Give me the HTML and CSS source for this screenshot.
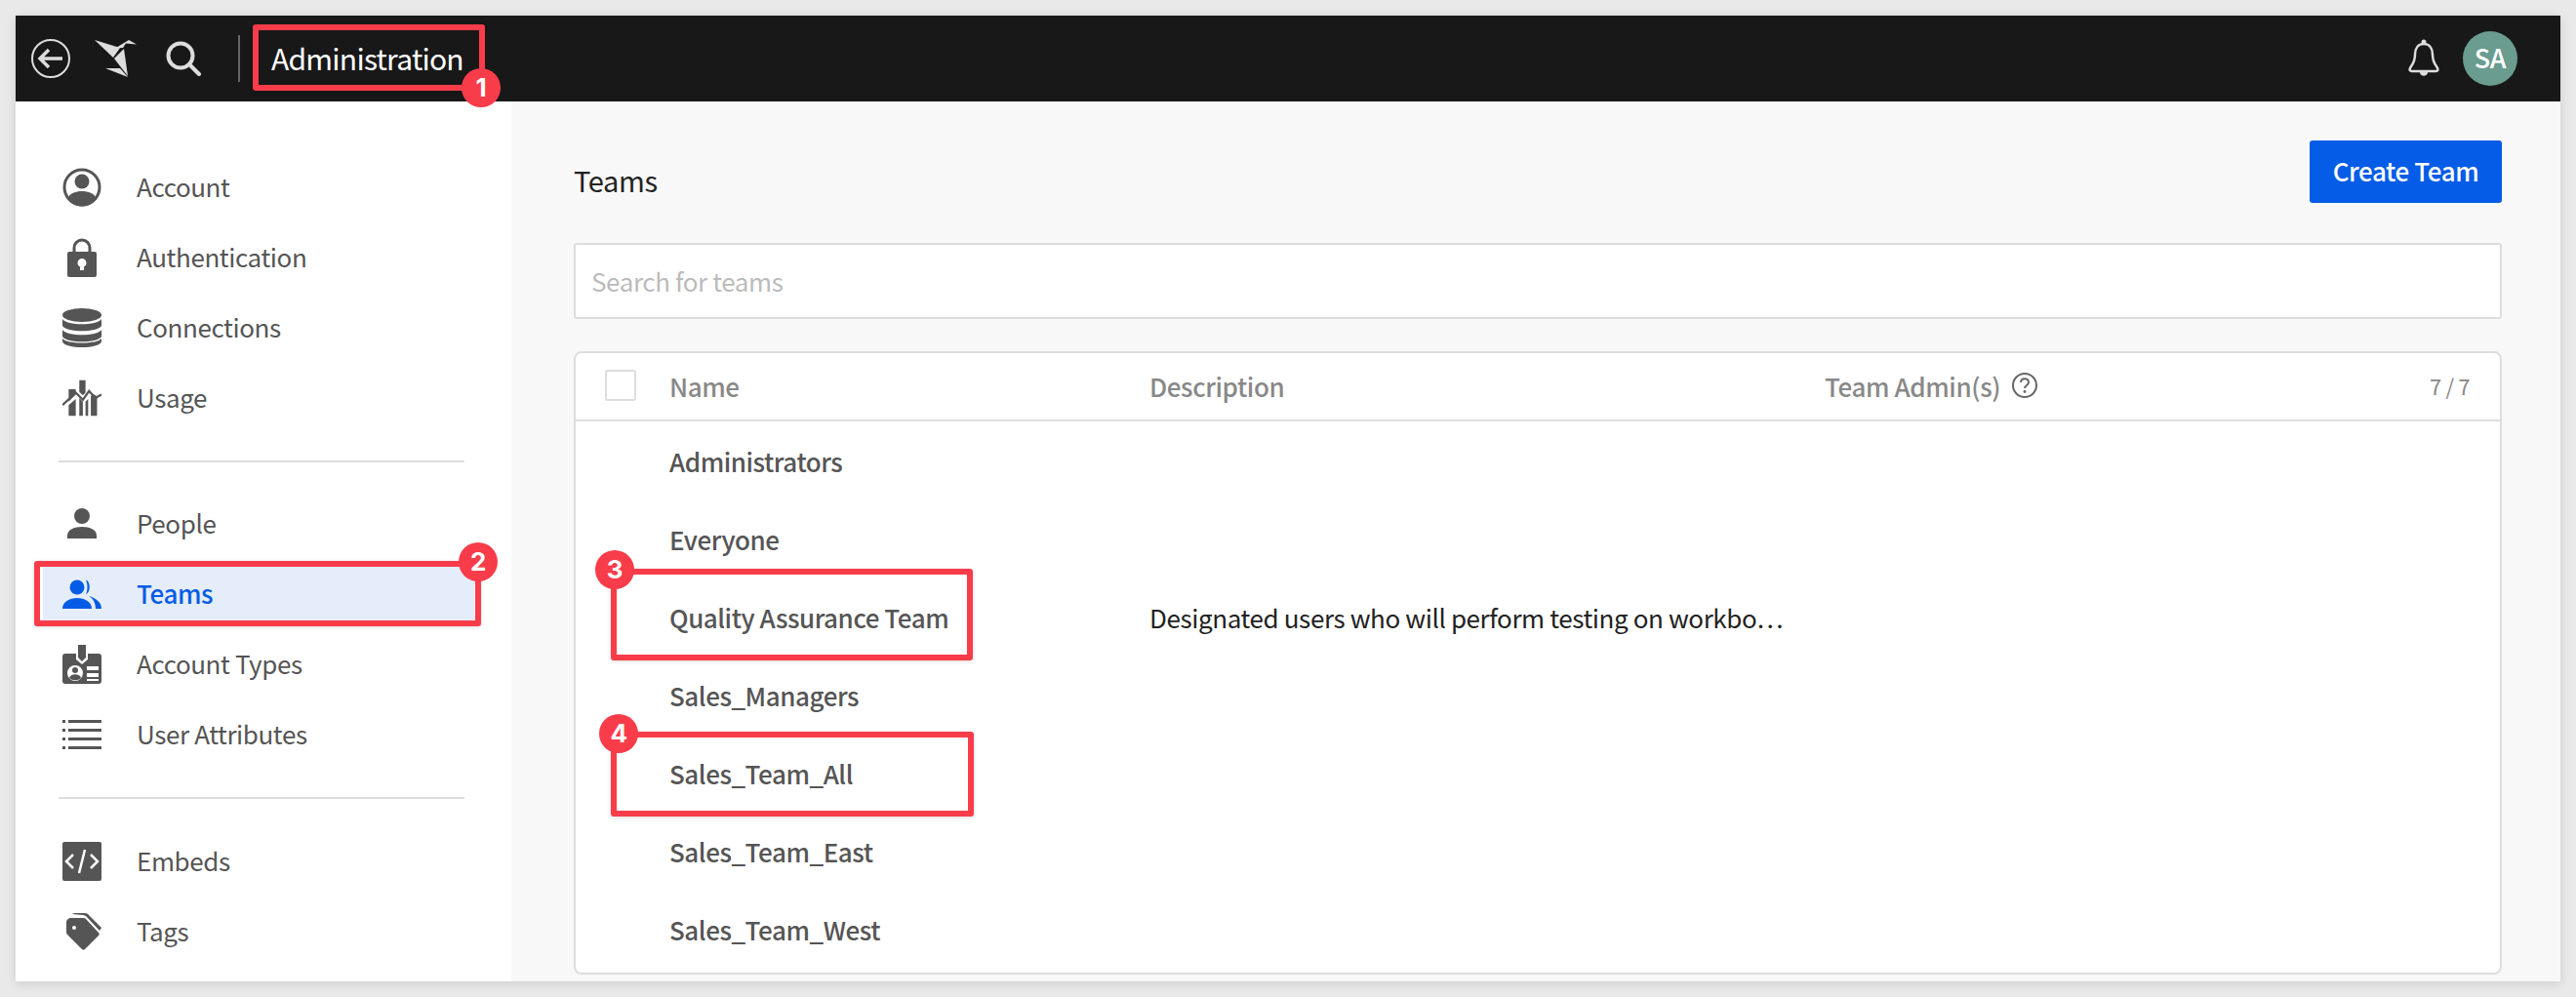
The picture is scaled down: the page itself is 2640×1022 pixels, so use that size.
FILE: index.html
```html
<!DOCTYPE html>
<html lang="en">
<head>
    <meta charset="UTF-8">
    <title>Administration - Teams</title>
    <link rel="stylesheet" href="styles.css">
</head>
<body>
    <div class="window">
        <header class="topbar">
            <svg class="icon-back" viewBox="0 0 40 40"><circle cx="20" cy="20" r="19" fill="none" stroke="#ddd" stroke-width="2"/><path d="M32 20H9M18 11l-9 9 9 9" fill="none" stroke="#ddd" stroke-width="3.500"/></svg>
            <svg class="icon-logo" viewBox="0 0 45 40"><path d="M1 1L27 9 20 19Z" fill="#ddd"/><path d="M22 9.500L36 1 44 5.500 33 4.500 30 9Z" fill="#ddd"/><path d="M21 20L31 10 35 38Z" fill="#ddd"/><path d="M12 30L27 30 35 39Z" fill="#ddd"/></svg>
            <svg class="icon-search" viewBox="0 0 36 36"><circle cx="15" cy="15" r="12.500" fill="none" stroke="#ddd" stroke-width="4"/><path d="M24 24L34 34" stroke="#ddd" stroke-width="4" stroke-linecap="round"/></svg>
            <div class="topbar-sep"></div>
            <div class="topbar-title">Administration</div>
            <div class="topbar-right">
                <svg class="icon-bell" viewBox="0 0 34 40"><path d="M17 5c-6 0-9 5-9 11 0 5-1 8-4 12-2 3-2 5 1 5h24c3 0 3-2 1-5-3-4-4-7-4-12 0-6-3-11-9-11z" fill="none" stroke="#ddd" stroke-width="2.500"/><circle cx="17" cy="3" r="2.500" fill="#ddd"/><path d="M13 34h8c0 5-8 5-8 0z" fill="#ddd"/></svg>
                <div class="avatar">SA</div>
            </div>
        </header>

        <div class="content">
            <nav class="sidebar">
                <a class="nav-item">
                    <svg class="nav-icon" viewBox="0 0 40 40"><circle cx="20" cy="20" r="18" fill="none" stroke="#555" stroke-width="3"/><circle cx="20" cy="14" r="7.500"/><path d="M5 32c2-6 9-8 15-8s13 2 15 8c-7 10-23 10-30 0z"/></svg>
                    Account
                </a>
                <a class="nav-item">
                    <svg class="nav-icon" viewBox="0 0 40 40"><path d="M12 18v-8a8 8 0 0 1 16 0v8" fill="none" stroke="#555" stroke-width="3"/><path fill-rule="evenodd" d="M7 14h26a2 2 0 0 1 2 2v22a2 2 0 0 1-2 2H7a2 2 0 0 1-2-2V16a2 2 0 0 1 2-2zM20 21a4.500 4.500 0 0 0-2 8.500V33h4v-3.500A4.500 4.500 0 0 0 20 21z"/></svg>
                    Authentication
                </a>
                <a class="nav-item">
                    <svg class="nav-icon" viewBox="0 0 40 40"><ellipse cx="20" cy="7" rx="20" ry="7"/><path d="M0 11c4 7 36 7 40 0v7c-4 7-36 7-40 0z"/><path d="M0 22c4 7 36 7 40 0v7c-4 7-36 7-40 0z"/><path d="M0 31c4 6 36 6 40 0v3c-2 8-38 8-40 0z"/></svg>
                    Connections
                </a>
                <a class="nav-item">
                    <svg class="nav-icon" viewBox="0 0 44 40"><path d="M7 10h8v6l-8 8zM19 0h7v14l-3 3-4-4zM34 15l5 3v22h-7V18zM7 28l8-7v19H7zM19 20l3 3 1 1v16h-4zM26 24l3-3v19h-3z"/><path d="M0 28l15-14 8 8 7-10 7 8 7-4" fill="none" stroke="#555" stroke-width="2.500"/></svg>
                    Usage
                </a>
                <div class="nav-sep"></div>
                <a class="nav-item">
                    <svg class="nav-icon" viewBox="0 0 40 40"><circle cx="20" cy="12" r="8"/><path d="M5 35v-3c0-6 7-9 15-9s15 3 15 9v3z"/></svg>
                    People
                </a>
                <a class="nav-item active">
                    <svg class="nav-icon" viewBox="0 0 40 40"><circle cx="15" cy="13" r="7.500"/><path d="M24 5.500c5 1 5 13 0 14.500 2-4 2-10 0-14.500z"/><path d="M0 35c0-7 7-11 15-11s15 4 15 11z"/><path d="M27 22c7 2 13 6 13 13h-6c0-5-2-10-7-13z"/></svg>
                    Teams
                </a>
                <a class="nav-item">
                    <svg class="nav-icon" viewBox="0 0 40 40"><path fill-rule="evenodd" d="M3 9h11v6l6 5 6-5V9h11a3 3 0 0 1 3 3v25a3 3 0 0 1-3 3H3a3 3 0 0 1-3-3V12a3 3 0 0 1 3-3zM13 21a8 8 0 1 0 0 16 8 8 0 0 0 0-16zM25 22v4h12v-4zM25 29v4h12v-4zM25 35v2h12v-2z"/><path d="M16 0h8v13l-4 4-4-4z"/><circle cx="13" cy="26" r="3"/><path d="M7 34c1-5 11-5 12 0-3 3-9 3-12 0z"/></svg>
                    Account Types
                </a>
                <a class="nav-item">
                    <svg class="nav-icon list-icon" viewBox="0 0 40 30"><path d="M0 0h3v3H0zM6 0h34v3H6zM0 9h3v3H0zM6 9h34v3H6zM0 18h3v3H0zM6 18h34v3H6zM0 27h3v3H0zM6 27h34v3H6z"/></svg>
                    User Attributes
                </a>
                <div class="nav-sep nav-sep-low"></div>
                <a class="nav-item">
                    <svg class="nav-icon" viewBox="0 0 40 40"><rect width="40" height="40" rx="2"/><path d="M11 13l-7 7 7 7M29 13l7 7-7 7M23 8l-6 24" fill="none" stroke="#fff" stroke-width="2.500"/></svg>
                    Embeds
                </a>
                <a class="nav-item">
                    <svg class="nav-icon" viewBox="0 0 40 40"><path fill-rule="evenodd" d="M9 6h12c1 0 2 0 3 1l13 14c1 1 1 2 0 3L23 38c-1 1-2 1-3 0L6 24c-1-1-2-2-2-3V11c0-3 2-5 5-5zM12 14a2 2 0 1 0 0 4 2 2 0 0 0 0-4z"/><path d="M10 2c1-1 2-1 3-1h9c2 0 3 0 4 1l14 14-2 3L25 5c-1-1-2-2-4-2z"/></svg>
                    Tags
                </a>
            </nav>

            <main class="main">
                <div class="page-head">
                    <h1 class="page-title">Teams</h1>
                    <button class="btn-create">Create Team</button>
                </div>
                <input class="search" type="text" placeholder="Search for teams">
                <div class="table">
                    <div class="row row-head">
                        <div class="checkbox"></div>
                        <div>Name</div>
                        <div>Description</div>
                        <div class="admin-cell">
                            Team Admin(s)
                            <svg class="icon-help" viewBox="0 0 26 26"><circle cx="13" cy="13" r="12" fill="none" stroke="#666" stroke-width="2"/><path d="M9 10c0-5 8-5 8 0 0 3-4 3-4 6" fill="none" stroke="#666" stroke-width="2"/><circle cx="13" cy="19.500" r="1.400" fill="#666"/></svg>
                            <span class="count">7 / 7</span>
                        </div>
                    </div>
                    <div class="row"><div></div><div class="team-name">Administrators</div></div>
                    <div class="row"><div></div><div class="team-name">Everyone</div></div>
                    <div class="row"><div></div><div class="team-name">Quality Assurance Team</div><div class="team-desc">Designated users who will perform testing on workbo…</div></div>
                    <div class="row"><div></div><div class="team-name">Sales_Managers</div></div>
                    <div class="row"><div></div><div class="team-name">Sales_Team_All</div></div>
                    <div class="row"><div></div><div class="team-name">Sales_Team_East</div></div>
                    <div class="row"><div></div><div class="team-name">Sales_Team_West</div></div>
                </div>
            </main>
        </div>
    </div>

    <!-- red callouts drawn over the screenshot -->
    <div class="callout callout-1"></div>
    <div class="callout callout-2"></div>
    <div class="callout callout-3"></div>
    <div class="callout callout-4"></div>
    <div class="badge badge-1">1</div>
    <div class="badge badge-2">2</div>
    <div class="badge badge-3">3</div>
    <div class="badge badge-4">4</div>
</body>
</html>
```

FILE: styles.css
```css
* {
    box-sizing: border-box;
}
html, body {
    height: 100%;
}
body {
    margin: 0;
    padding: 16px;
    background-color: #e9e9e9;
    font-family: "Noto Sans CJK SC", "Noto Sans", sans-serif;
    letter-spacing: -0.4px;
    position: relative;
    overflow: hidden;
}
.window {
    height: 990px;
    display: flex;
    flex-direction: column;
    background: #f8f8f8;
    box-shadow: 0 2px 10px rgba(0,0,0,0.12);
    overflow: hidden;
}

/* top bar */
.topbar {
    height: 88px;
    flex: none;
    display: flex;
    align-items: center;
    background: #181818;
    padding-left: 16px;
}
.icon-back {
    width: 40px;
    height: 40px;
}
.icon-logo {
    width: 45px;
    height: 40px;
    margin-left: 24px;
}
.icon-search {
    width: 36px;
    height: 36px;
    margin-left: 29px;
}
.topbar-sep {
    width: 2px;
    height: 48px;
    background: #666;
    margin-left: 38px;
}
.topbar-title {
    color: #fff;
    font-size: 30px;
    letter-spacing: -0.75px;
    line-height: 40px;
    margin-left: 32px;
    padding-bottom: 2px;
}
.topbar-right {
    margin-left: auto;
    display: flex;
    align-items: center;
    padding-right: 44px;
}
.icon-bell {
    width: 34px;
    height: 40px;
}
.avatar {
    width: 56px;
    height: 56px;
    margin-left: 23px;
    border-radius: 50%;
    background: #6a9c90;
    color: #fff;
    font-size: 27px;
    font-weight: 500;
    line-height: 54px;
    text-align: center;
}

/* sidebar */
.content {
    flex: 1;
    display: flex;
    min-height: 0;
}
.sidebar {
    width: 508px;
    flex: none;
    background: #fff;
    padding: 52px 38px 0 28px;
}
.nav-item {
    height: 72px;
    display: flex;
    align-items: center;
    gap: 36px;
    padding-left: 20px;
    padding-bottom: 3px;
    color: #555;
    font-size: 26px;
    line-height: 32px;
}
.nav-icon {
    width: 40px;
    height: 40px;
    flex: none;
    fill: #555;
    margin-top: 3px;
}
.nav-item.active {
    height: 60px;
    margin: 6px 0;
    background: #e6edfa;
    color: #055ce6;
    font-weight: 500;
}
.nav-item.active .nav-icon {
    fill: #055ce6;
}
.list-icon {
    height: 30px;
}
.nav-sep {
    height: 2px;
    background: #ddd;
    margin: 28px 10px 27px 16px;
}
.nav-sep-low {
    margin-top: 28px;
    margin-bottom: 28px;
}

/* main */
.main {
    flex: 1;
    padding: 40px 60px 0 64px;
    min-width: 0;
}
.page-head {
    display: flex;
    align-items: center;
    justify-content: space-between;
    height: 64px;
}
.page-title {
    margin: 0;
    padding-top: 16px;
    font-size: 29px;
    font-weight: 400;
    line-height: 40px;
    color: #222;
}
.btn-create {
    width: 197px;
    height: 64px;
    border: none;
    border-radius: 3px;
    background: #055ce6;
    color: #fff;
    font-family: inherit;
    font-size: 26px;
    font-weight: 500;
    letter-spacing: -0.4px;
    padding-bottom: 4px;
}
.search {
    display: block;
    width: 100%;
    height: 78px;
    margin-top: 41px;
    padding: 0 16px 2px;
    background: #fff;
    border: 2px solid #ddd;
    border-radius: 3px;
    font-family: inherit;
    font-size: 26px;
    letter-spacing: -0.4px;
}
.search::placeholder {
    color: #bbb;
}
.table {
    height: 639px;
    margin-top: 33px;
    background: #fff;
    border: 2px solid #ddd;
    border-radius: 8px;
}
.row {
    height: 80px;
    display: grid;
    grid-template-columns: 66px 492px 692px 1fr;
    align-items: center;
    padding: 0 31px 0 30px;
}
.row-head {
    height: 70px;
    padding-bottom: 2px;
    border-bottom: 2px solid #ddd;
    color: #888;
    font-size: 26px;
    font-weight: 500;
}
.checkbox {
    width: 32px;
    height: 32px;
    border: 2px solid #ddd;
    border-radius: 3px;
}
.admin-cell {
    display: flex;
    align-items: center;
    gap: 12px;
}
.icon-help {
    width: 26px;
    height: 26px;
}
.count {
    margin-left: auto;
    font-size: 22px;
    font-weight: 400;
}
.team-name {
    color: #555;
    font-size: 26px;
    font-weight: 500;
    letter-spacing: -0.45px;
}
.team-desc {
    grid-column: 3 / 5;
    color: #222;
    font-size: 26px;
}

/* callouts */
.callout {
    position: absolute;
    border: 6px solid #f93c4a;
    border-radius: 3px;
    box-shadow: 0 1px 4px rgba(0,0,0,0.15);
}
.callout-1 {
    left: 259px;
    top: 25px;
    width: 238px;
    height: 68px;
}
.callout-2 {
    left: 35px;
    top: 575px;
    width: 458px;
    height: 67px;
}
.callout-3 {
    left: 626px;
    top: 583px;
    width: 371px;
    height: 94px;
}
.callout-4 {
    left: 626px;
    top: 750px;
    width: 372px;
    height: 87px;
}
.badge {
    position: absolute;
    width: 40px;
    height: 40px;
    border-radius: 50%;
    background: #f93c4a;
    color: #fff;
    font-family: Inter, "Liberation Sans", sans-serif;
    font-size: 26px;
    font-weight: 700;
    line-height: 40px;
    text-align: center;
}
.badge-1 {
    left: 473px;
    top: 70px;
}
.badge-2 {
    left: 470px;
    top: 556px;
}
.badge-3 {
    left: 610px;
    top: 564px;
}
.badge-4 {
    left: 614px;
    top: 732px;
}
```
